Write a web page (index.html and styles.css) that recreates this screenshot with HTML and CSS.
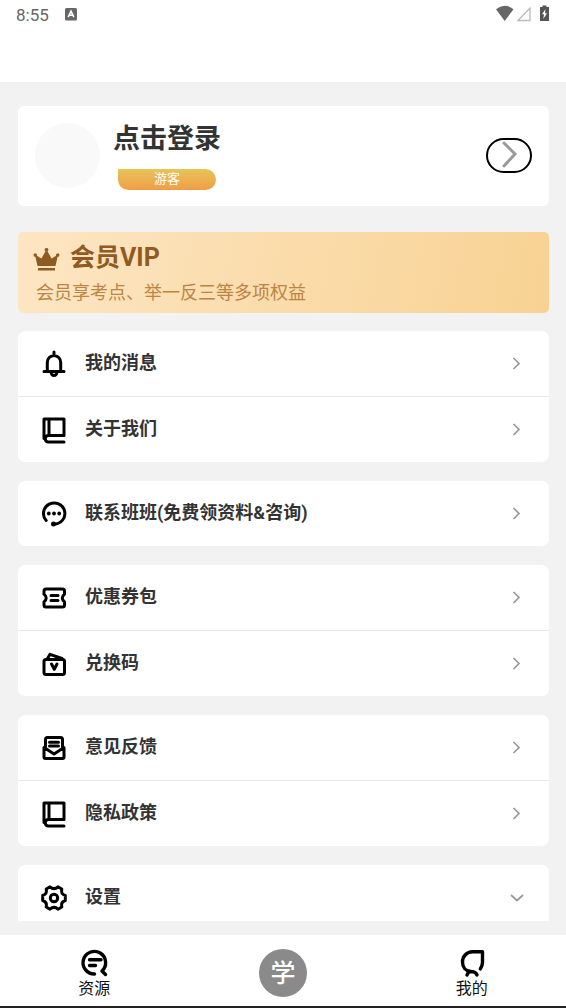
FILE: index.html
```html
<!DOCTYPE html>
<html lang="zh-CN">
<head>
<meta charset="utf-8">
<meta name="viewport" content="width=device-width, initial-scale=1">
<title>我的</title>
<link rel="stylesheet" href="styles.css">
</head>
<body>
<svg class="defs" aria-hidden="true">
  <symbol id="book" viewBox="0 0 28 28"><path d="M4 22.500V3h20v16.500H8a3.300 3.300 0 0 0 0 6.500h16M9 3v16.500"/></symbol>
  <symbol id="next" viewBox="0 0 12 16"><path d="M2.500 2l5.500 5.500L2.500 13"/></symbol>
</svg>
<div class="app">
  <header class="status">
    <span class="clock">8:55</span>
    <svg class="notice" viewBox="0 0 12 13" aria-hidden="true"><rect width="12" height="12.500" rx="1.500" fill="#666"/><path d="M3.200 9.200L6 3.200l2.800 6M4.300 7.300h3.400" fill="none" stroke="#fff" stroke-width="1.600"/></svg>
    <svg class="signals" viewBox="0 0 54 18" aria-hidden="true">
      <path d="M1 4.200Q9.500-2.800 18.500 4.200L9.700 16z" fill="#666"/>
      <path d="M23 15.500L35 3v12.500z" fill="none" stroke="#bbb" stroke-width="1.300"/>
      <path d="M45 2h2.500V.5h4V2H54v14h-9z" fill="#555"/>
      <path d="M50.500 4L47 9.300h2L48.300 14 52 8.300h-2z" fill="#fff"/>
    </svg>
  </header>

  <main class="content">
    <section class="profile">
      <div class="avatar"></div>
      <div class="identity">
        <h1 class="login">点击登录</h1>
        <span class="badge">游客</span>
      </div>
      <button class="enter" type="button" aria-label="点击登录"><svg viewBox="0 0 20 30"><path d="M5 3L16 14 5 26"/></svg></button>
    </section>

    <a class="vip" href="#vip">
      <span class="vip-title">
        <svg class="crown" viewBox="0 0 27 23" aria-hidden="true"><path d="M4.500 18L2.400 8.800A1.700 1.700 0 1 1 3.800 7.800L8.500 10.500l4-7.300a1.800 1.800 0 1 1 2 0l4 7.300 4.700-2.700a1.700 1.700 0 1 1 1.400 1L22.500 18zM5 20h17v2.500H5z"/></svg>
        会员VIP
      </span>
      <span class="vip-text">会员享考点、举一反三等多项权益</span>
    </a>

    <nav class="menu">
      <div class="group">
        <a class="row" href="#messages"><svg class="icon" viewBox="0 0 28 28"><path d="M14 2v3M7.300 21v-8.500a6.700 7 0 0 1 13.400 0V21M4 21.500h20M11 22a3 3.400 0 0 0 6 0"/></svg><span class="label">我的消息</span><svg class="next"><use href="#next"/></svg></a>
        <a class="row" href="#about"><svg class="icon"><use href="#book"/></svg><span class="label">关于我们</span><svg class="next"><use href="#next"/></svg></a>
      </div>
      <div class="group">
        <a class="row" href="#contact"><svg class="icon" viewBox="0 0 28 28"><path d="M6.200 20.500A10.700 10.500 0 1 1 14 24"/><g class="solid"><circle cx="13.500" cy="24" r="2.500"/><circle cx="8.800" cy="13.500" r="1.900"/><circle cx="14" cy="13.500" r="1.900"/><circle cx="19.200" cy="13.500" r="1.900"/></g></svg><span class="label">联系班班(免费领资料&amp;咨询)</span><svg class="next"><use href="#next"/></svg></a>
      </div>
      <div class="group">
        <a class="row" href="#coupons"><svg class="icon" viewBox="0 0 28 28"><path d="M6 5h16.500a2 2 0 0 1 2 2v3.200Q20 14 24.500 17.800V21a2 2 0 0 1-2 2H6a2 2 0 0 1-2-2v-3.200Q8.500 14 4 10.200V7a2 2 0 0 1 2-2zM11 11.500h7M11 16.500h7"/></svg><span class="label">优惠券包</span><svg class="next"><use href="#next"/></svg></a>
        <a class="row" href="#redeem"><svg class="icon" viewBox="0 0 28 28"><rect x="4" y="9.500" width="20.500" height="15" rx="2"/><path d="M7.500 8.500L10 4.300 22 8.500M11.500 14l2.800 5.300L17 14"/></svg><span class="label">兑换码</span><svg class="next"><use href="#next"/></svg></a>
      </div>
      <div class="group">
        <a class="row" href="#feedback"><svg class="icon" viewBox="0 0 28 28"><path d="M5.500 13V5.500a2 2 0 0 1 2-2h13a2 2 0 0 1 2 2V13M9.500 8.300h9M9.500 12h9M4 13.500V23a1.500 1.500 0 0 0 1.500 1.500h17A1.500 1.500 0 0 0 24 23v-9.500L14 20z"/></svg><span class="label">意见反馈</span><svg class="next"><use href="#next"/></svg></a>
        <a class="row" href="#privacy"><svg class="icon"><use href="#book"/></svg><span class="label">隐私政策</span><svg class="next"><use href="#next"/></svg></a>
      </div>
      <div class="group">
        <a class="row" href="#settings"><svg class="icon" viewBox="0 0 28 28"><path d="M10 2.800Q14 6.500 18 2.800L21.800 5Q20.500 10 25.300 11.500v5Q20.500 18 21.800 23L18 25.200Q14 21.500 10 25.200L6.200 23Q7.500 18 2.700 16.500v-5Q7.500 10 6.200 5z"/><circle cx="14" cy="14" r="3.700"/></svg><span class="label">设置</span><svg class="down" viewBox="0 0 16 12"><path d="M2 3l6 5.500L14 3"/></svg></a>
      </div>
    </nav>
  </main>

  <nav class="tabs">
    <a class="tab" href="#resources"><svg class="tab-icon" viewBox="0 0 28 28"><path d="M14.500 25A11.300 11.300 0 1 1 22 22L25.500 25.500M9.500 10.700h11.500M9.500 16.500h6"/></svg><span>资源</span></a>
    <a class="tab" href="#study"><span class="study">学</span></a>
    <a class="tab" href="#mine"><svg class="tab-icon" viewBox="0 0 28 28"><path d="M22.300 20Q24.500 17 24.500 13V2.800H14.500A10 10 0 0 0 4.500 13c0 5 3 9 8 9.500 4 0 5.500 1 6.500 3.500M13 22.500Q10 22.500 9 26"/></svg><span>我的</span></a>
  </nav>
</div>
</body>
</html>
```
FILE: styles.css
```css
* {
  box-sizing: border-box;
}

body {
  margin: 0;
  background: #f2f2f2;
  color: #333;
  font-family: Roboto, "Noto Sans CJK SC", sans-serif;
}

a {
  color: inherit;
  text-decoration: none;
}

button {
  padding: 0;
  font: inherit;
}

.defs {
  display: none;
}

.app {
  display: flex;
  flex-direction: column;
  height: 100vh;
}

.status {
  display: flex;
  flex: none;
  align-items: flex-start;
  height: 82px;
  padding: 5px 17px 0 16px;
  background: #fff;
}

.clock {
  color: #666;
  font-size: 17px;
  line-height: 20px;
}

.notice {
  width: 12px;
  height: 13px;
  margin: 3px auto 0 16px;
}

.signals {
  width: 54px;
  height: 18px;
}

.content {
  flex: 1;
  min-height: 0;
  margin-bottom: 14px;
  padding: 24px 17px 0 18px;
  overflow: hidden;
}

.profile {
  display: flex;
  align-items: center;
  height: 100px;
  margin-bottom: 26px;
  padding: 0 17px 2px;
  border-radius: 6px;
  background: #fff;
}

.avatar {
  width: 65px;
  height: 65px;
  border-radius: 50%;
  background: #f9f9f9;
}

.identity {
  flex: 1;
  margin-left: 13px;
}

.login {
  margin: 0 0 12px;
  font-size: 27px;
  font-weight: 700;
  line-height: 36px;
}

.badge {
  display: block;
  width: 98px;
  height: 21px;
  margin-left: 5px;
  border-radius: 0 11px 11px 11px;
  background: linear-gradient(#e6c559, #f09d46);
  color: #fff;
  font-size: 13px;
  line-height: 20px;
  text-align: center;
}

.enter {
  width: 46px;
  height: 35px;
  border: 2px solid #000;
  border-radius: 18px;
  background: #fff;
}

.enter svg {
  display: block;
  width: 20px;
  height: 30px;
  margin: auto;
  fill: none;
  stroke: #999;
  stroke-width: 3;
  stroke-linecap: round;
}

.vip {
  display: block;
  height: 81px;
  margin-bottom: 18px;
  padding: 8px 15px;
  border-radius: 5px;
  background: linear-gradient(100deg, #fde6c3, #f8d293);
}

.vip-title {
  display: flex;
  align-items: center;
  gap: 10px;
  color: #8f5b23;
  font-size: 25px;
  font-weight: 700;
  line-height: 36px;
}

.crown {
  width: 27px;
  height: 23px;
  margin-top: 3px;
  fill: #8f5b23;
}

.vip-text {
  display: block;
  padding-left: 3px;
  color: #bd8443;
  font-size: 18px;
  line-height: 34px;
}

.menu {
  display: flex;
  flex-direction: column;
  gap: 19px;
}

.group {
  overflow: hidden;
  border-radius: 7px;
  background: #fff;
}

.row {
  display: flex;
  align-items: center;
  height: 65px;
  padding: 0 26px 0 22px;
}

.row + .row {
  height: 66px;
  border-top: 1px solid #e8e8e8;
}

.icon,
.tab-icon {
  flex: none;
  width: 28px;
  height: 28px;
  fill: none;
  stroke: #000;
  stroke-width: 3;
  stroke-linejoin: round;
  stroke-linecap: round;
  overflow: visible;
}

.tab-icon {
  stroke-width: 3.4;
}

.solid {
  stroke: none;
  fill: #000;
}

.label {
  flex: 1;
  padding: 0 0 1px 17px;
  font-size: 18px;
  font-weight: 700;
  line-height: 26px;
}

.next,
.down {
  fill: none;
  stroke: #999;
  stroke-width: 1.7;
}

.next {
  width: 12px;
  height: 16px;
}

.down {
  width: 16px;
  height: 12px;
  margin-right: -2px;
}

.tabs {
  display: flex;
  flex: none;
  height: 73px;
  border-bottom: 2px solid #222;
  background: #fff;
}

.tab {
  display: flex;
  flex: 1;
  flex-direction: column;
  align-items: center;
  padding-top: 14px;
  color: #111;
  font-size: 16px;
  line-height: 24px;
}

.study {
  width: 48px;
  height: 48px;
  border-radius: 50%;
  background: #8a8a8a;
  color: #fff;
  font-size: 25px;
  font-weight: 500;
  line-height: 49px;
  text-align: center;
}
```
